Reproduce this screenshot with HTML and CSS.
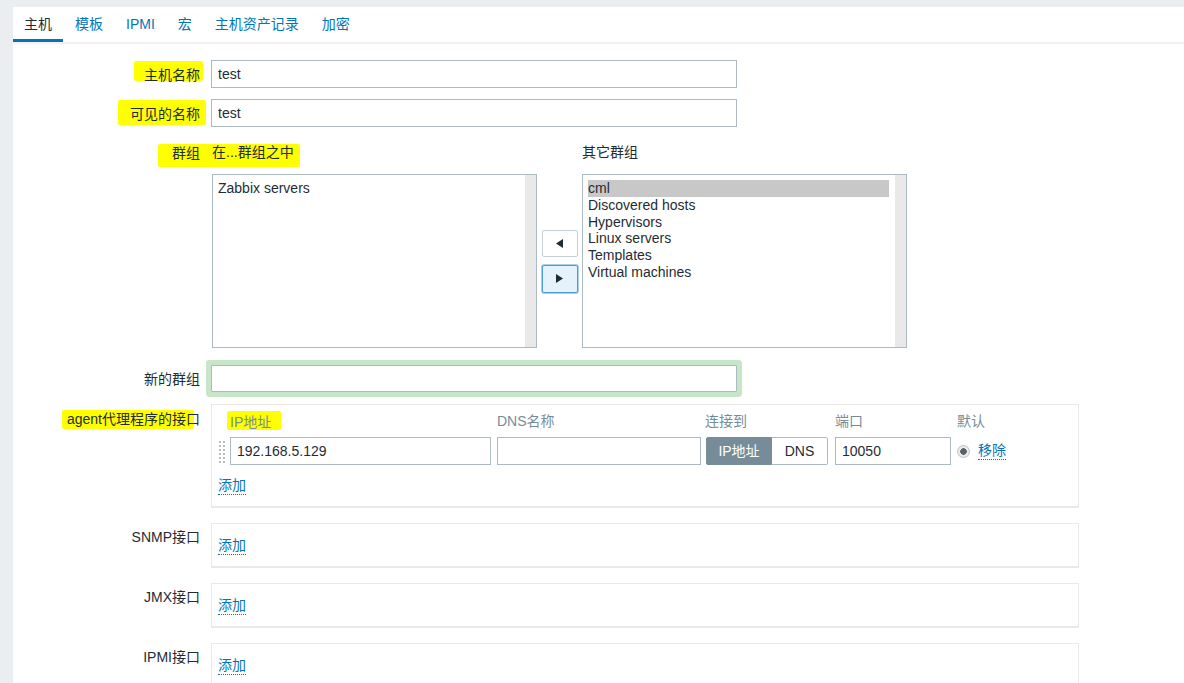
FILE: index.html
```html
<!DOCTYPE html>
<html lang="zh-CN">
<head>
<meta charset="utf-8">
<title>主机</title>
<link rel="stylesheet" href="styles.css">
</head>
<body>
<div class="page">
  <ul class="tabs">
    <li class="tab active">主机</li>
    <li class="tab">模板</li>
    <li class="tab">IPMI</li>
    <li class="tab">宏</li>
    <li class="tab">主机资产记录</li>
    <li class="tab">加密</li>
  </ul>

  <div class="form">
    <div class="row">
      <div class="lbl"><span class="hl hl-name">主机名称</span></div>
      <div><input class="txt" type="text" value="test"></div>
    </div>

    <div class="row">
      <div class="lbl"><span class="hl hl-visible">可见的名称</span></div>
      <div><input class="txt" type="text" value="test"></div>
    </div>

    <div class="row row-groups">
      <div class="lbl"><span class="hl hl-groups">群组</span></div>
      <div class="groups">
        <div class="gcol">
          <div class="ghead">在...群组之中</div>
          <div class="list">
            <div class="items">
              <div class="item">Zabbix servers</div>
            </div>
            <div class="sbar"></div>
          </div>
        </div>
        <div class="arrows">
          <button class="abtn" type="button">
            <svg width="7" height="9" viewBox="0 0 7 9"><polygon points="7,0 7,9 0,4.5" fill="#1f2c33"/></svg>
          </button>
          <button class="abtn focus" type="button">
            <svg width="7" height="9" viewBox="0 0 7 9"><polygon points="0,0 0,9 7,4.5" fill="#1f2c33"/></svg>
          </button>
        </div>
        <div class="gcol">
          <div class="ghead">其它群组</div>
          <div class="list">
            <div class="items">
              <div class="item sel">cml</div>
              <div class="item">Discovered hosts</div>
              <div class="item">Hypervisors</div>
              <div class="item">Linux servers</div>
              <div class="item">Templates</div>
              <div class="item">Virtual machines</div>
            </div>
            <div class="sbar"></div>
          </div>
        </div>
      </div>
    </div>

    <div class="row row-newgroup">
      <div class="lbl">新的群组</div>
      <div><input class="txt glow" type="text" value=""></div>
    </div>

    <div class="row row-iface">
      <div class="lbl"><span class="hl hl-agent">agent代理程序的接口</span></div>
      <div class="iface">
        <div class="igrid">
          <div></div>
          <div class="ih"><span class="hl hl-ip">IP地址</span></div>
          <div class="ih">DNS名称</div>
          <div class="ih">连接到</div>
          <div class="ih">端口</div>
          <div class="ih">默认</div>

          <div class="handle">
            <svg width="7" height="22" viewBox="0 0 7 22">
              <g fill="#b4c0c6">
                <rect x="0" y="0" width="2" height="2"/><rect x="4" y="0" width="2" height="2"/>
                <rect x="0" y="4" width="2" height="2"/><rect x="4" y="4" width="2" height="2"/>
                <rect x="0" y="8" width="2" height="2"/><rect x="4" y="8" width="2" height="2"/>
                <rect x="0" y="12" width="2" height="2"/><rect x="4" y="12" width="2" height="2"/>
                <rect x="0" y="16" width="2" height="2"/><rect x="4" y="16" width="2" height="2"/>
                <rect x="0" y="20" width="2" height="2"/><rect x="4" y="20" width="2" height="2"/>
              </g>
            </svg>
          </div>
          <div><input class="itxt w-ip" type="text" value="192.168.5.129"></div>
          <div><input class="itxt w-dns" type="text" value=""></div>
          <div class="seg">
            <span class="seg-on">IP地址</span>
            <span class="seg-off">DNS</span>
          </div>
          <div><input class="itxt w-port" type="text" value="10050"></div>
          <div class="def">
            <span class="radio"></span>
            <a class="link">移除</a>
          </div>
        </div>
        <a class="link add">添加</a>
      </div>
    </div>

    <div class="row row-iface">
      <div class="lbl">SNMP接口</div>
      <div class="iface empty"><a class="link add">添加</a></div>
    </div>

    <div class="row row-iface">
      <div class="lbl">JMX接口</div>
      <div class="iface empty"><a class="link add">添加</a></div>
    </div>

    <div class="row row-iface">
      <div class="lbl">IPMI接口</div>
      <div class="iface empty"><a class="link add">添加</a></div>
    </div>
  </div>
</div>
</body>
</html>
```

FILE: styles.css
```css
* {
  box-sizing: border-box;
}

html,
body {
  margin: 0;
  padding: 0;
}

body {
  background: #ebeef0;
  font-family: "Liberation Sans", "Noto Sans CJK SC", sans-serif;
  font-size: 14px;
  color: #1f2c33;
  overflow: hidden;
}

.page {
  margin: 7px 0 0 13px;
  background: #ffffff;
  min-height: 720px;
}

/* Tabs */
.tabs {
  display: flex;
  list-style: none;
  margin: 0;
  padding: 0;
  border-bottom: 2px solid #f2f2f2;
}

.tab {
  padding: 2px 11px 0;
  line-height: 30px;
  border-bottom: 3px solid transparent;
  color: #0275b8;
  margin-right: 1px;
  white-space: nowrap;
}

.tab.active {
  color: #1f2c33;
  border-bottom-color: #0275b8;
}

/* Form */
.form {
  padding-top: 16px;
}

.row {
  display: grid;
  grid-template-columns: 187px 1fr;
  column-gap: 11px;
  align-items: start;
  margin-bottom: 11px;
}

.row-groups {
  margin-bottom: 17px;
}

.row-newgroup {
  margin-bottom: 11px;
}

.row-iface {
  margin-bottom: 15px;
}

.lbl {
  text-align: right;
  line-height: 28px;
  white-space: nowrap;
}

.txt {
  display: block;
  font: inherit;
  color: inherit;
  width: 526px;
  height: 28px;
  margin: 0;
  padding: 0 6px;
  border: 1px solid #acbbc2;
  border-radius: 0;
  background: #ffffff;
  outline: none;
}

.txt.glow {
  height: 27px;
  border-radius: 1px;
  box-shadow: 0 0 0 5px #c7e5c7;
}

/* Yellow marker annotations */
.hl {
  position: relative;
  z-index: 0;
  display: inline-block;
  line-height: 20px;
  vertical-align: middle;
}

.hl::before {
  content: "";
  position: absolute;
  z-index: -1;
  background: #ffff00;
  border-radius: 2px;
}

.hl-name::before {
  top: -4px;
  bottom: 4px;
  left: -10px;
  right: -3px;
}

.hl-visible::before {
  top: -4px;
  bottom: -1px;
  left: -12px;
  right: -6px;
}

.hl-groups::before {
  top: 1px;
  bottom: -4px;
  left: -14px;
  right: -100px;
}

.hl-agent::before {
  top: 1px;
  bottom: 0;
  left: -5px;
  right: 6px;
}

.hl-ip::before {
  top: -1px;
  bottom: 2px;
  left: -3px;
  right: -10px;
}

/* Groups */
.groups {
  display: flex;
  margin-left: 1px;
}

.gcol {
  display: flex;
  flex-direction: column;
}

.ghead {
  position: relative;
  z-index: 1;
  line-height: 28px;
  height: 28px;
  margin-bottom: 8px;
  white-space: nowrap;
}

.list {
  display: flex;
  width: 325px;
  height: 174px;
  border: 1px solid #acbbc2;
  background: #ffffff;
}

.items {
  flex: 1;
  padding: 5px 6px 5px 5px;
}

.item {
  line-height: 16.8px;
  white-space: nowrap;
}

.item.sel {
  background: #c8c8c8;
}

.sbar {
  width: 11px;
  background: #e9e9e9;
}

.arrows {
  width: 45px;
  margin-top: 36px;
  height: 174px;
  display: flex;
  flex-direction: column;
  justify-content: center;
  align-items: center;
  gap: 8px;
}

.abtn {
  width: 36px;
  height: 27px;
  padding: 0;
  margin: 0;
  display: flex;
  align-items: center;
  justify-content: center;
  background: #ffffff;
  border: 1px solid #c4ced3;
  border-radius: 2px;
}

.abtn.focus {
  height: 28px;
  background: #e5f2fc;
  border: 1px solid #4f9bd6;
  box-shadow: 0 0 0 1px #a8cfee;
}

/* Interfaces */
.iface {
  width: 868px;
  border: 1px solid #e9e9e9;
  border-bottom-width: 2px;
  padding: 6px 6px 11px;
}

.iface.empty {
  padding: 13px 6px 11px;
}

.igrid {
  display: grid;
  grid-template-columns: 11px 267px 208px 130px 122px auto;
  row-gap: 6px;
  margin-left: 1px;
}

.ih {
  line-height: 20px;
  height: 20px;
  color: #768d99;
  white-space: nowrap;
}

.handle {
  padding-top: 4px;
  height: 28px;
}

.handle svg {
  display: block;
}

.itxt {
  display: block;
  font: inherit;
  color: inherit;
  height: 28px;
  margin: 0;
  padding: 0 6px;
  border: 1px solid #acbbc2;
  border-radius: 0;
  background: #ffffff;
  outline: none;
}

.w-ip {
  width: 261px;
}

.w-dns {
  width: 204px;
}

.w-port {
  width: 116px;
}

.seg {
  display: flex;
  margin-left: 1px;
}

.seg-on,
.seg-off {
  height: 28px;
  line-height: 26px;
  text-align: center;
  white-space: nowrap;
}

.seg-on {
  width: 66px;
  background: #768d99;
  border: 1px solid #768d99;
  color: #ffffff;
  border-radius: 2px 0 0 2px;
}

.seg-off {
  width: 56px;
  background: #ffffff;
  border: 1px solid #acbbc2;
  border-left: none;
  border-radius: 0 2px 2px 0;
}

.def {
  display: flex;
  align-items: center;
  height: 28px;
  gap: 8px;
}

.radio {
  width: 13px;
  height: 13px;
  border-radius: 50%;
  border: 1px solid #b7c2c8;
  background: radial-gradient(circle, #5a5f62 0, #5a5f62 3px, #e8eaeb 3.5px);
}

.link {
  color: #0275b8;
  line-height: 17px;
  border-bottom: 1px dotted #0275b8;
  white-space: nowrap;
  cursor: pointer;
}

.add {
  display: block;
  width: max-content;
  margin-top: 12px;
}

.iface.empty .add {
  margin-top: 0;
}
```
